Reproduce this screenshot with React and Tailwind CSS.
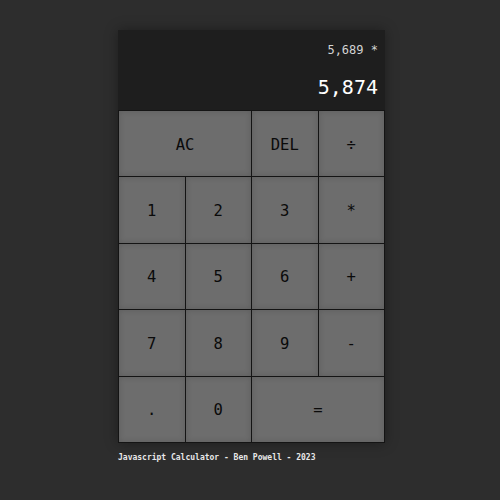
const keys = [
  { label: "AC", span: "col-span-2" },
  { label: "DEL" },
  { label: "÷" },
  { label: "1" },
  { label: "2" },
  { label: "3" },
  { label: "*" },
  { label: "4" },
  { label: "5" },
  { label: "6" },
  { label: "+" },
  { label: "7" },
  { label: "8" },
  { label: "9" },
  { label: "-" },
  { label: "." },
  { label: "0" },
  { label: "=", span: "col-span-2" },
];

export default function App() {
  return (
    <div
      className="w-[500px] h-[500px] bg-[#2d2d2d] flex flex-col pl-[118px] pt-[30px]"
      style={{ fontFamily: '"DejaVu Sans Mono", "Liberation Mono", monospace' }}
    >
      <div className="w-[267px] shadow-[0_0_12px_rgba(0,0,0,0.35)]">
        {/* display */}
        <div className="h-[80px] bg-[#1e1e1e] flex flex-col items-end justify-between pr-[7px] pt-[14px] pb-[13px]">
          <div className="text-[12px] leading-none text-[#d4d4d4]">5,689 *</div>
          <div className="text-[20px] leading-none text-white">5,874</div>
        </div>

        {/* keypad */}
        <div className="grid grid-cols-4 auto-rows-[65.4px] gap-px p-px bg-[#141414]">
          {keys.map((k) => (
            <button
              key={k.label}
              className={`${k.span || ""} bg-[#6d6d6d] text-[#0a0a0a] text-[15.5px] pt-[3px] shadow-[inset_0_0_6px_rgba(0,0,0,0.15)]`}
            >
              {k.label}
            </button>
          ))}
        </div>
      </div>

      <div className="w-[267px] mt-[9px] text-[8px] font-bold text-[#e8e8e8]">
        Javascript Calculator - Ben Powell - 2023
      </div>
    </div>
  );
}
